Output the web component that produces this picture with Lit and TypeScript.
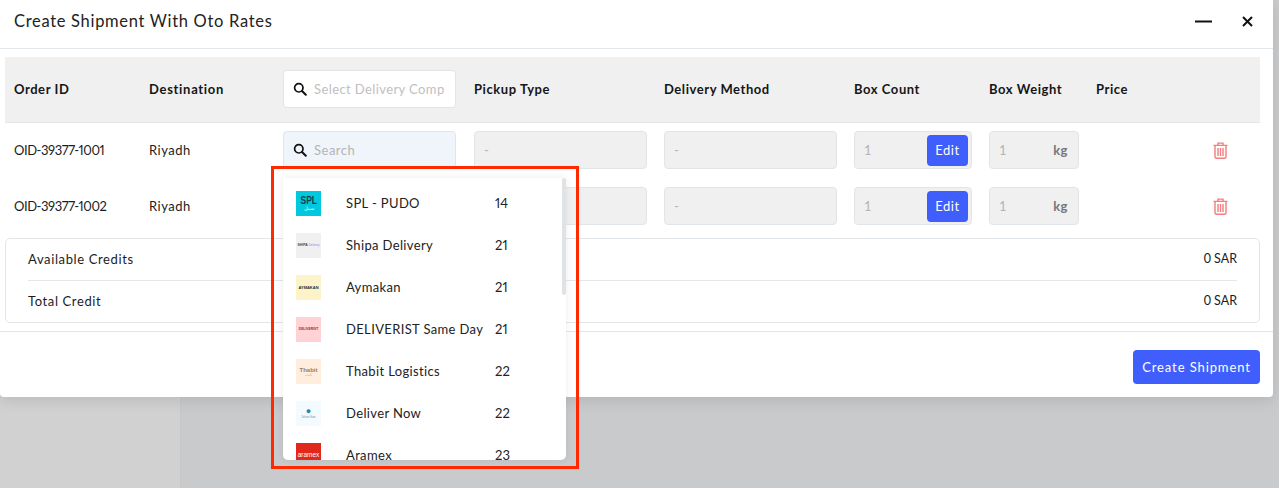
import { LitElement, html, css } from "lit";
import { customElement } from "lit/decorators.js";

const search = html`<svg class="search" viewBox="0 0 14 14" width="14" height="14"><circle cx="5.8" cy="5.8" r="4.2" fill="none" stroke="#111" stroke-width="1.7"/><path d="M9 9l3.8 3.8" stroke="#111" stroke-width="2" stroke-linecap="round"/></svg>`;
const trash = html`<svg class="trash" viewBox="0 0 15 17" width="15" height="17" fill="none" stroke="#f47d7d" stroke-width="1.4"><path d="M.5 3.4h14M5 3V1.1h5V3"/><path d="M2 3.6v11.2c0 .9.6 1.5 1.5 1.5h8c.9 0 1.5-.6 1.5-1.5V3.6"/><path d="M5 6v8M7.5 6v8M10 6v8"/></svg>`;

type Logo = { bg: string; cls: string; top: string; sub?: string };
const companies: { name: string; days: string; logo: Logo }[] = [
  { name: "SPL - PUDO", days: "14", logo: { bg: "#00c8df", cls: "spl", top: "SPL", sub: "سبل" } },
  { name: "Shipa Delivery", days: "21", logo: { bg: "#f0f0f1", cls: "shipa", top: "SHIPA", sub: "Delivery" } },
  { name: "Aymakan", days: "21", logo: { bg: "#fdf3c8", cls: "aym", top: "AYMAKAN" } },
  { name: "DELIVERIST Same Day", days: "21", logo: { bg: "#ffd3d5", cls: "dlv", top: "DELIVERIST" } },
  { name: "Thabit Logistics", days: "22", logo: { bg: "#ffeedd", cls: "thb", top: "Thabit", sub: "ثابت" } },
  { name: "Deliver Now", days: "22", logo: { bg: "#f3fbff", cls: "dn", top: "●", sub: "Deliver Now" } },
  { name: "Aramex", days: "23", logo: { bg: "#e1281c", cls: "arx", top: "aramex" } },
];

const rows = [
  { id: "OID-39377-1001", covered: false },
  { id: "OID-39377-1002", covered: true },
];

@customElement("app-root")
export class AppRoot extends LitElement {
  static styles = css`
    :host { display: block; width: 1279px; height: 488px; position: relative; overflow: hidden;
      font-family: "Lato", "Open Sans", sans-serif; font-size: 13px; color: #1c1c1c; letter-spacing: .5px; }
    * { box-sizing: border-box; }
    .backdrop { display: flex; height: 488px; background: #c9cacb; }
    .side { width: 180px; background: #d1d1d1; }
    .main { flex: 1; border-left: 1px solid #c6c7c7; }
    .modal { position: absolute; left: 0; top: 0; width: 1273px; height: 397px; background: #fff;
      border-radius: 0 0 4px 4px; box-shadow: 0 4px 14px rgba(0,0,0,.1); display: flex; flex-direction: column; }
    .head { height: 49px; flex: none; border-bottom: 1px solid #e2e7ec; display: flex; align-items: center; padding: 0 20px 0 14px; }
    .title { font-size: 16.5px; flex: 1; letter-spacing: .69px; margin-top: -7px; color: #222; }
    .head svg { display: block; margin-top: -6px; }
    .min { margin-right: 30px; }
    .body { padding: 8px 13px 0 5px; flex: 1; }
    .grid { display: grid; grid-template-columns: 135px 134px 191px 190px 190px 135px 107px 1fr; padding-left: 9px; align-items: center; }
    .thead { height: 66px; padding-bottom: 2px; background: #f0f0f1; border-bottom: 1px solid #e2e7ec; font-weight: 700; letter-spacing: .56px; color: #161616; }
    .thead .dest { letter-spacing: .7px; }
    .rows { height: 115px; }
    .row { height: 56px; padding-bottom: 2px; }
    .mono { font-variant-numeric: proportional-nums; letter-spacing: -.45px; }
    .field { height: 38px; border: 1px solid #e1e5e9; border-radius: 4px; background: #f0f0f1; display: flex; align-items: center; padding: 0 9px; color: #b4b4b4; width: 173px; }
    .field.sel { background: #fff; color: #c0c0c0; overflow: hidden; white-space: nowrap; font-weight: 400; letter-spacing: .4px; }
    .field.open { background: #f0f4fb; color: #b4b4b4; }
    .search { flex: none; margin-right: 7px; }
    .count { width: 118px; padding-right: 3px; justify-content: space-between; }
    .edit { width: 41px; height: 31px; border-radius: 4px; background: #3f5efb; color: #fff; display: flex; align-items: center; justify-content: center; }
    .weight { width: 90px; justify-content: space-between; padding-right: 10px; }
    .kg { color: #777; font-weight: 700; }
    .act { display: flex; justify-content: flex-end; padding-right: 32px; }
    .trash { display: block; }
    .totals { height: 85px; border: 1px solid #e2e6e9; border-radius: 5px; padding: 0 22px; display: flex; flex-direction: column; }
    .tr { flex: 1; display: flex; align-items: center; justify-content: space-between; padding-bottom: 2px; letter-spacing: .62px; }
    .tr + .tr { border-top: 1px solid #e2e7ec; }
    .sar { font-size: 12.5px; letter-spacing: 0; }
    .foot { height: 66px; flex: none; border-top: 1px solid #e2e6e9; display: flex; justify-content: flex-end; align-items: flex-start; padding: 18px 13px 0 0; }
    .create { width: 127px; height: 34px; border-radius: 4px; background: #3f5efb; color: #fff; display: flex; align-items: center; justify-content: center; letter-spacing: .9px; }
    .focus { position: absolute; left: 271px; top: 166px; width: 308px; height: 303px; border: 3px solid #ff2a00; }
    .drop { position: absolute; left: 283px; top: 178px; width: 283px; height: 282px; background: #fff; border-radius: 0 0 5px 5px; overflow: hidden;
      box-shadow: 0 0 8px rgba(0,0,0,.08); padding: 13px 0 0 13px; }
    .bar { position: absolute; right: 0; top: 0; width: 4px; height: 117px; background: #dfe3e6; border-radius: 2px; }
    .opt { display: grid; grid-template-columns: 50px 149px auto; align-items: center; height: 25px; margin-bottom: 17px; color: #222; letter-spacing: .36px; }
    .name { margin-top: -1px; }
    .num { margin-top: -1px; font-variant-numeric: proportional-nums; letter-spacing: .2px; }
    .logo { width: 25px; height: 25px; display: flex; flex-direction: column; align-items: center; justify-content: center; overflow: hidden; letter-spacing: 0; line-height: 1; font-family: "Liberation Sans", sans-serif; white-space: nowrap; }
    .logo b { font-weight: 700; display: block; }
    .logo i { font-style: normal; display: block; }
    .spl b { font-size: 10px; color: #173f4b; transform: scaleX(.85); }
    .spl i { font-size: 5px; color: #fff; }
    .shipa { flex-direction: row; }
    .shipa b { font-size: 3.4px; color: #444; }
    .shipa i { font-size: 3px; color: #8e86e6; margin-left: 1px; }
    .aym b { font-size: 4px; color: #33301c; }
    .dlv b { font-size: 3.3px; color: #a8262c; }
    .thb b { font-size: 6px; color: #8f8272; }
    .thb i { font-size: 4px; color: #efa64f; }
    .dn b { font-size: 9px; color: #2a84ba; }
    .dn i { font-size: 2.6px; color: #6a8fb0; margin-top: 1px; }
    .arx b { font-size: 6.5px; color: #fff; font-weight: 400; }
  `;

  render() {
    return html`
      <div class="backdrop"><div class="side"></div><div class="main"></div></div>
      <div class="modal">
        <div class="head">
          <div class="title">Create Shipment With Oto Rates</div>
          <svg class="min" width="17" height="3" viewBox="0 0 17 3"><path d="M0 1.5h17" stroke="#111" stroke-width="2"/></svg>
          <svg width="11" height="11" viewBox="0 0 11 11"><path d="M1 1l9 9M10 1l-9 9" stroke="#111" stroke-width="2"/></svg>
        </div>
        <div class="body">
          <div class="grid thead">
            <div>Order ID</div><div class="dest">Destination</div>
            <div class="field sel">${search}Select Delivery Comp</div>
            <div>Pickup Type</div><div>Delivery Method</div><div>Box Count</div><div>Box Weight</div><div>Price</div>
          </div>
          <div class="rows">
            ${rows.map((r) => html`<div class="grid row">
              <div class="mono">${r.id}</div><div>Riyadh</div>
              <div class="field open">${r.covered ? "" : html`${search}Search`}</div>
              <div class="field">${r.covered ? "" : "-"}</div>
              <div class="field">-</div>
              <div class="field count">1<div class="edit">Edit</div></div>
              <div class="field weight">1<span class="kg">kg</span></div>
              <div class="act">${trash}</div>
            </div>`)}
          </div>
          <div class="totals">
            <div class="tr"><span>Available Credits</span><span class="sar">0 SAR</span></div>
            <div class="tr"><span>Total Credit</span><span class="sar">0 SAR</span></div>
          </div>
        </div>
        <div class="foot"><div class="create">Create Shipment</div></div>
      </div>
      <div class="focus"></div>
      <div class="drop">
        <div class="bar"></div>
        ${companies.map((c) => html`<div class="opt">
          <div class="logo ${c.logo.cls}" style="background:${c.logo.bg}"><b>${c.logo.top}</b>${c.logo.sub ? html`<i>${c.logo.sub}</i>` : ""}</div>
          <span class="name">${c.name}</span><span class="num">${c.days}</span>
        </div>`)}
      </div>
    `;
  }
}
